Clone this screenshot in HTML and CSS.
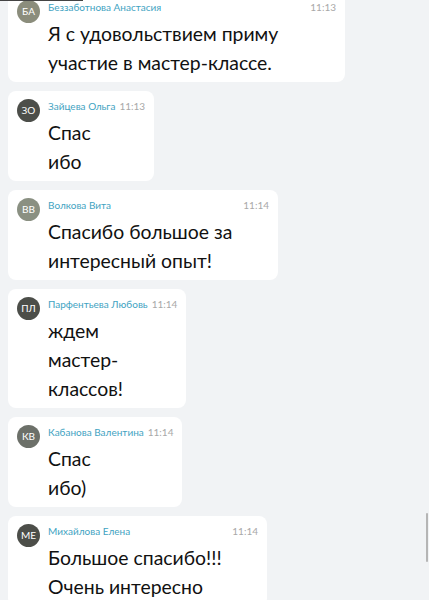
FILE: index.html
```html
<!DOCTYPE html>
<html lang="ru">
<head>
  <meta charset="UTF-8" />
  <meta name="viewport" content="width=device-width, initial-scale=1.0" />
  <title>Чат мастер-класса</title>
  <link rel="stylesheet" href="styles.css">
</head>
<body>

  <!-- Полоска сверху и скролл -->
  <div class="top-line"></div>
  <div class="scroll-thumb"></div>

  <div class="chat">

    <div class="msg msg--wide">
      <div class="avatar avatar--olive">БА</div>
      <div class="msg-body">
        <div class="msg-head">
          <span class="author">Беззаботнова Анастасия</span>
          <span class="time">11:13</span>
        </div>
        <div class="msg-text">Я с удовольствием приму<br>участие в мастер-классе.</div>
      </div>
    </div>

    <div class="msg">
      <div class="avatar avatar--dark">ЗО</div>
      <div class="msg-body">
        <div class="msg-head">
          <span class="author">Зайцева Ольга</span>
          <span class="time">11:13</span>
        </div>
        <div class="msg-text">Спас<br>ибо</div>
      </div>
    </div>

    <div class="msg msg--mid">
      <div class="avatar avatar--gray">ВВ</div>
      <div class="msg-body">
        <div class="msg-head">
          <span class="author">Волкова Вита</span>
          <span class="time">11:14</span>
        </div>
        <div class="msg-text">Спасибо большое за<br>интересный опыт!</div>
      </div>
    </div>

    <div class="msg">
      <div class="avatar avatar--dark">ПЛ</div>
      <div class="msg-body">
        <div class="msg-head">
          <span class="author">Парфентьева Любовь</span>
          <span class="time">11:14</span>
        </div>
        <div class="msg-text">ждем<br>мастер-<br>классов!</div>
      </div>
    </div>

    <div class="msg">
      <div class="avatar avatar--mid">КВ</div>
      <div class="msg-body">
        <div class="msg-head">
          <span class="author">Кабанова Валентина</span>
          <span class="time">11:14</span>
        </div>
        <div class="msg-text">Спас<br>ибо)</div>
      </div>
    </div>

    <div class="msg msg--last">
      <div class="avatar avatar--dark">МЕ</div>
      <div class="msg-body">
        <div class="msg-head">
          <span class="author">Михайлова Елена</span>
          <span class="time">11:14</span>
        </div>
        <div class="msg-text">Большое спасибо!!!<br>Очень интересно</div>
      </div>
    </div>

  </div>

</body>
</html>
```

FILE: styles.css
```css
body {
  margin: 0;
  background-color: #f1f3f5;
  font-family: 'Lato', 'Open Sans', sans-serif;
  height: 600px;
  overflow: hidden;
  position: relative;
}

/* Лента сообщений */
.chat {
  display: flex;
  flex-direction: column;
  align-items: flex-start;
  gap: 9px;
  padding: 0 8px;
  margin-top: -8px;
}

.msg {
  display: flex;
  gap: 8px;
  width: fit-content;
  box-sizing: border-box;
  padding: 7px 9px 5px 9px;
  background: #fff;
  border-radius: 8px;
}

.msg--wide {
  width: 337px;
}

.msg--mid {
  width: 270px;
}

.msg--last {
  width: 259px;
}

.avatar {
  flex: none;
  width: 23px;
  height: 23px;
  border-radius: 50%;
  color: #fff;
  font-size: 10px;
  line-height: 23px;
  text-align: center;
  margin-top: 1px;
}

.avatar--olive { background: #8b8d7c; }
.avatar--dark { background: #4c4e49; }
.avatar--gray { background: #8a9082; }
.avatar--mid { background: #6c7069; }

.msg-body {
  flex: 1;
}

.msg-head {
  display: flex;
  justify-content: space-between;
  gap: 4px;
  height: 16px;
  line-height: 16px;
  font-size: 10px;
  margin-bottom: 4px;
  white-space: nowrap;
}

.author {
  color: #3fa3c2;
}

.time {
  color: #a8a8a8;
}

.msg-text {
  color: #111;
  font-size: 19.4px;
  line-height: 29px;
}

/* Полоска в левом верхнем углу */
.top-line {
  position: absolute;
  top: 0;
  left: 0;
  width: 83px;
  height: 1px;
  background: #444;
  z-index: 2;
}

/* Ползунок прокрутки */
.scroll-thumb {
  position: absolute;
  right: 1px;
  top: 513px;
  width: 2px;
  height: 49px;
  background: #b5b5b5;
  border-radius: 1px;
}
```
